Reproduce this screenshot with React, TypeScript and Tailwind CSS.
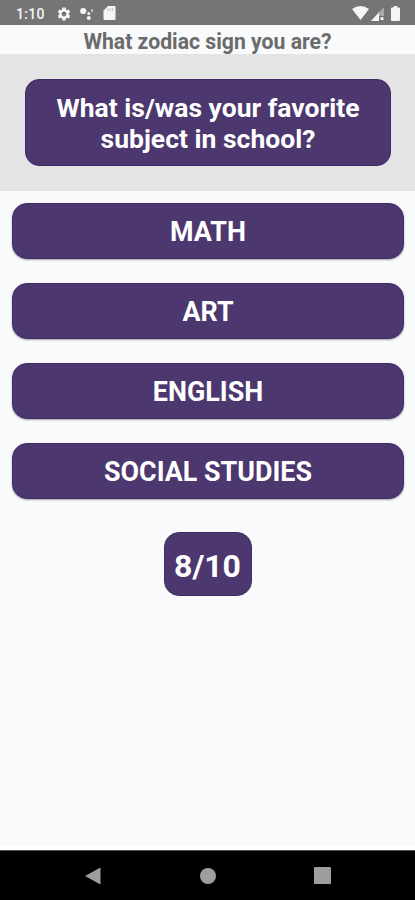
import { useState } from "react";
import { MdSettings } from "react-icons/md";

const answers = ["Math", "Art", "English", "Social Studies"];

const StatusBar = () => (
  <div className="flex items-center h-[25px] shrink-0 pl-4 pr-[15px] pt-[2px] bg-[#757575] text-[#f5f5f5]">
    <span className="w-[40px] text-[14px] leading-none font-medium tracking-[0.3px]">
      1:10
    </span>
    <MdSettings className="w-4 h-4" />
    <svg className="w-4 h-4 ml-[7px]" viewBox="0 0 16 16" fill="currentColor">
      <circle cx="4.2" cy="5" r="3.1" />
      <circle cx="9.8" cy="7.400" r="1.5" />
      <circle cx="9.8" cy="12" r="2" />
      <circle cx="13" cy="4.5" r="1" />
    </svg>
    <svg
      className="w-[13px] h-[14px] ml-[8px] mb-px"
      viewBox="0 0 13 14"
      fill="currentColor"
    >
      <path d="M5 0h6.2Q12.5 0 12.5 1.3v11.4Q12.5 14 11.2 14H1.8Q.5 14 .5 12.7V4.6z" />
      <path d="M5 2.4v2.4M7.3 2.4v2.4M9.6 2.4v2.4" stroke="#b5b5b5" />
    </svg>
    <svg
      className="w-[17px] h-[14px] ml-auto mb-px"
      viewBox="0 0 17 14"
      fill="currentColor"
    >
      <path d="M0 3Q8.500-3 17 3L8.500 14z" />
    </svg>
    <svg className="w-[13px] h-[14px] ml-[2px]" viewBox="0 0 13 14">
      <path d="M13 0v14H0z" fill="#a8a8a8" />
      <path d="M8 5.400V14H0z" fill="#f5f5f5" />
      <path d="M8 9h5v5H8z" fill="#757575" />
      <path d="M9.500 10.300h3V13h-3z" fill="#f5f5f5" />
    </svg>
    <svg
      className="w-[9px] h-[15px] ml-[7px] mb-px"
      viewBox="0 0 9 15"
      fill="currentColor"
    >
      <path d="M2.700 0h3.600v1.500H8q1 0 1 1V14q0 1-1 1H1q-1 0-1-1V2.500q0-1 1-1h1.700z" />
    </svg>
  </div>
);

const NavigationBar = () => (
  <div className="flex items-center justify-between h-[50px] shrink-0 px-[84px] bg-black border-t border-[#555555] text-[#9e9e9e]">
    <svg className="w-[17px] h-[18px]" viewBox="0 0 17 18" fill="currentColor">
      <path d="M16.500 .5v17L1 9z" />
    </svg>
    <div className="w-4 h-4 rounded-full bg-[#9e9e9e]" />
    <div className="w-[17px] h-[17px] rounded-[1px] bg-[#9e9e9e]" />
  </div>
);

const App = () => {
  const [selected, setSelected] = useState("");

  return (
    <div className="flex flex-col w-full h-screen overflow-hidden bg-[#f8fafc] font-['Roboto',sans-serif]">
      <StatusBar />
      <h1 className="h-[29px] shrink-0 pt-[3px] text-center text-[21.2px] leading-[28px] font-bold text-[#6b6b6b]">
        What zodiac sign you are?
      </h1>
      <div className="h-[137px] shrink-0 pl-[25px] pr-6 pt-[25px] bg-[#e4e4e4]">
        <div className="flex items-center justify-center h-[87px] px-6 rounded-[14px] bg-[#4d376f] border border-[#44296b]">
          <h2 className="text-center text-[26.5px] leading-[31px] font-bold text-white">
            What is/was your favorite subject in school?
          </h2>
        </div>
      </div>
      <div className="flex flex-col gap-6 pl-3 pr-[11px] pt-3">
        {answers.map((answer) => (
          <button
            key={answer}
            className="h-14 pt-[3px] rounded-[15px] bg-[#4d376f] border border-[#44296b] shadow-[0_1px_2px_rgba(0,0,0,0.35)] text-[26.9px] leading-none font-bold uppercase text-white"
            aria-pressed={selected === answer}
            onClick={() => setSelected(answer)}
          >
            {answer}
          </button>
        ))}
      </div>
      <div className="flex items-center justify-center self-center w-[88px] h-16 mt-[33px] pt-[3px] rounded-[15px] bg-[#4d376f] border border-[#44296b] text-[32px] leading-none font-bold text-white">
        8/10
      </div>
      <div className="grow" />
      <div className="h-1 shrink-0 bg-white" />
      <NavigationBar />
    </div>
  );
};

export default App;
